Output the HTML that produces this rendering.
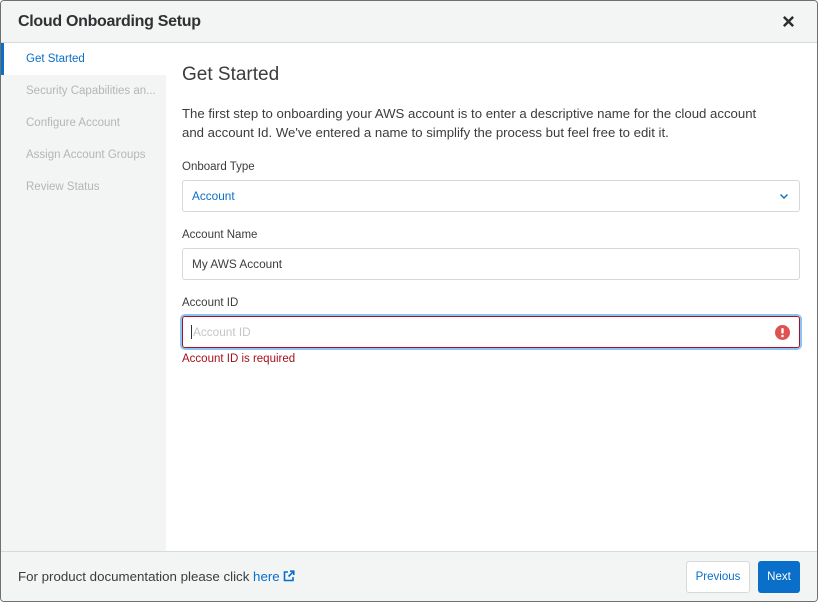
<!DOCTYPE html>
<html><head><style>
*{box-sizing:border-box;margin:0;padding:0}
body{width:818px;height:602px;background:#fff;font-family:"Liberation Sans",sans-serif;overflow:hidden;position:relative}
.dlg{position:absolute;left:0;top:0;width:818px;height:602px;border:1px solid #6f6f6f;border-radius:4px;overflow:hidden;background:#fff}
.hdr{position:absolute;left:0;top:0;width:816px;height:42px;background:#f3f4f4;border-bottom:1px solid #d8dada}
.hdr h1{position:absolute;left:17px;top:12px;font-size:16px;font-weight:bold;color:#2f3133;letter-spacing:-0.3px}
.x{position:absolute;left:781px;top:14px}
.side{position:absolute;left:0;top:42px;width:165px;height:508px;background:#f3f4f4}
.side div{height:32px;line-height:33px;padding-left:25px;font-size:11.5px;color:#b3b6b8;white-space:nowrap}
.side .act{background:#fff;color:#0a6fc9;border-left:3px solid #0a6fc9;padding-left:22px}
.t{position:absolute;left:181px;top:63px;font-size:19px;color:#3a3c3e;white-space:nowrap}
.p{position:absolute;left:181px;top:103px;width:598px;font-size:13.2px;line-height:19px;color:#3a3c3e}
.lbl{position:absolute;left:181px;font-size:11.5px;color:#3a3c3e}
.in{position:absolute;left:181px;width:618px;height:32px;border:1px solid #d6d8d9;border-radius:3px;font-size:11.8px;line-height:30px;padding-left:9px;color:#3a3c3e}
.err{position:absolute;left:181px;top:352px;font-size:11.5px;color:#a3121d}
.ftr{position:absolute;left:0;top:550px;width:816px;height:50px;background:#f3f4f4;border-top:1px solid #d8dada}
.ftr .d{position:absolute;left:17px;top:17px;font-size:13.3px;color:#3a3c3e}
.ftr a{color:#0a6fc9;text-decoration:none}
.prev{position:absolute;left:685px;top:9px;width:64px;height:32px;border:1px solid #d6d8d9;border-radius:3px;background:#fff;color:#0a6fc9;font-size:11.5px;text-align:center;line-height:30px}
.next{position:absolute;left:757px;top:9px;width:42px;height:32px;border-radius:3px;background:#0a6fc9;color:#fff;font-size:11.5px;text-align:center;line-height:32px}
</style></head><body>
<div class="dlg">
<div class="hdr"><h1>Cloud Onboarding Setup</h1>
<svg class="x" width="13" height="13" viewBox="0 0 14 14"><path d="M2 2L12 12M12 2L2 12" stroke="#2a2c2e" stroke-width="2.6"/></svg></div>
<div class="side">
<div class="act">Get Started</div>
<div>Security Capabilities an...</div>
<div>Configure Account</div>
<div>Assign Account Groups</div>
<div>Review Status</div>
</div>
<div class="t">Get Started</div>
<div class="p">The first step to onboarding your AWS account is to enter a descriptive name for the cloud account and account Id. We've entered a name to simplify the process but feel free to edit it.</div>
<div class="lbl" style="top:160px">Onboard Type</div>
<div class="in" style="top:179px;color:#0a6fc9">Account
<svg style="position:absolute;right:10px;top:12px" width="10" height="7" viewBox="0 0 10 7"><path d="M1.5 1.5L5 5L8.5 1.5" stroke="#0a6fc9" stroke-width="1.4" fill="none"/></svg></div>
<div class="lbl" style="top:228px">Account Name</div>
<div class="in" style="top:247px">My AWS Account</div>
<div class="lbl" style="top:296px">Account ID</div>
<div class="in" style="top:315px;height:32px;border:1px solid #a3121d;box-shadow:0 0 0 2px #8cc4f5;color:#c4c6c8"><span style="border-left:1px solid #333;margin-left:-1px;padding-left:1px">Account ID</span>
<svg style="position:absolute;right:9px;top:8px" width="15" height="15" viewBox="0 0 15 15"><circle cx="7.5" cy="7.5" r="7.5" fill="#e05252"/><rect x="6.3" y="3" width="2.4" height="5.6" rx="1" fill="#fff"/><circle cx="7.5" cy="11" r="1.3" fill="#fff"/></svg></div>
<div class="err">Account ID is required</div>
<div class="ftr"><div class="d">For product documentation please click <a>here</a>
<svg width="12" height="12" viewBox="0 0 12 12" style="vertical-align:-1px"><path d="M5 2H1.5V10.5H10V7M7 1.2H10.8V5M10.8 1.2L5.5 6.5" stroke="#0a6fc9" stroke-width="1.6" fill="none"/></svg></div>
<div class="prev">Previous</div><div class="next">Next</div></div>
</div>
</body></html>
